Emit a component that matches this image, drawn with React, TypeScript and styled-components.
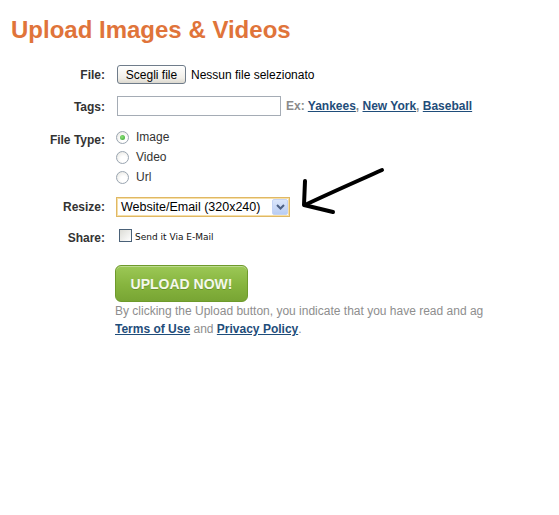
import React from 'react';
import styled, { createGlobalStyle } from 'styled-components';

const GlobalStyle = createGlobalStyle`
	html, body {
		margin: 0;
		padding: 0;
		background: #ffffff;
	}
	body {
		font-family: "Liberation Sans", Arial, sans-serif;
		font-size: 12px;
		color: #333333;
	}
`;

export default function App() {
	return (
		<Page>
			<GlobalStyle />
			<Title>Upload Images &amp; Videos</Title>

			<Form>
				<Row $top={21}>
					<Label>File:</Label>
					<Field>
						<FileButton type="button">Scegli file</FileButton>
						<FileName>Nessun file selezionato</FileName>
					</Field>
				</Row>

				<Row $top={12}>
					<Label>Tags:</Label>
					<Field>
						<TextInput type="text" />
						<Hint>
							Ex: <HintLink href="#">Yankees</HintLink>, <HintLink href="#">New York</HintLink>,{' '}
							<HintLink href="#">Baseball</HintLink>
						</Hint>
					</Field>
				</Row>

				<Row $top={11}>
					<Label>File Type:</Label>
					<RadioList>
						<RadioOption>
							<Radio $checked />
							Image
						</RadioOption>
						<RadioOption>
							<Radio />
							Video
						</RadioOption>
						<RadioOption>
							<Radio />
							Url
						</RadioOption>
					</RadioList>
				</Row>

				<Row $top={10}>
					<Label>Resize:</Label>
					<Field>
						<Select>
							<SelectValue>Website/Email (320x240)</SelectValue>
							<SelectArrow>
								<svg width="9" height="6" viewBox="0 0 9 6">
									<path d="M1 1 L4.5 4.5 L8 1" fill="none" stroke="#4d6185" strokeWidth="2" />
								</svg>
							</SelectArrow>
						</Select>
					</Field>
				</Row>

				<Row $top={12}>
					<Label>Share:</Label>
					<Field>
						<CheckLabel>
							<Checkbox />
							Send it Via E-Mail
						</CheckLabel>
					</Field>
				</Row>

				<Actions>
					<UploadButton type="button">UPLOAD NOW!</UploadButton>
					<Disclaimer>
						<Line>By clicking the Upload button, you indicate that you have read and agree to the</Line>
						<Line>
							<TermsLink href="#">Terms of Use</TermsLink> and <TermsLink href="#">Privacy Policy</TermsLink>.
						</Line>
					</Disclaimer>
				</Actions>
			</Form>

			<Annotation width="559" height="515" viewBox="0 0 559 515">
				<g fill="none" stroke="#000" strokeWidth="4" strokeLinecap="round" strokeLinejoin="round">
					<path d="M382 170 C360 180 330 193 305 205" />
					<path d="M305 181 L304 205 L333 212" />
				</g>
			</Annotation>
		</Page>
	);
}

const Page = styled.div`
	position: relative;
	width: 559px;
	height: 515px;
	overflow: hidden;
`;

const Title = styled.h1`
	margin: 0;
	padding: 16px 0 0 11px;
	font-family: "Liberation Sans", Arial, sans-serif;
	font-size: 24px;
	font-weight: bold;
	line-height: 28px;
	color: #e0743a;
`;

const Form = styled.div`
	display: flex;
	flex-direction: column;
`;

const Row = styled.div<{ $top: number }>`
	display: grid;
	grid-template-columns: 105px 1fr;
	column-gap: 11px;
	align-items: baseline;
	margin-top: ${(props) => props.$top}px;
`;

const Label = styled.div`
	text-align: right;
	font-weight: bold;
	font-size: 12px;
	color: #333333;
`;

const Field = styled.div`
	display: flex;
	align-items: center;
`;

const FileButton = styled.button`
	height: 19px;
	width: 69px;
	margin: 0 0 0 1px;
	padding: 0;
	border: 1px solid #6f7c8a;
	border-radius: 3px;
	background: linear-gradient(#ffffff, #f1efe9 70%, #dcd8cf);
	font-family: "Liberation Sans", Arial, sans-serif;
	font-size: 12px;
	color: #000000;
`;

const FileName = styled.span`
	margin-left: 5px;
	font-size: 12px;
	color: #000000;
`;

const TextInput = styled.input`
	box-sizing: border-box;
	width: 164px;
	height: 20px;
	margin: 0 0 0 1px;
	border: 1px solid #a5acb5;
	padding: 0 3px;
`;

const Hint = styled.span`
	margin-left: 5px;
	font-size: 12px;
	font-weight: bold;
	color: #8a8a8a;
`;

const HintLink = styled.a`
	color: #1f4d7a;
	font-weight: bold;
	text-decoration: underline;
`;

const RadioList = styled.div`
	display: flex;
	flex-direction: column;
`;

const RadioOption = styled.label`
	display: flex;
	align-items: center;
	height: 20px;
	font-size: 12px;
	color: #333333;
`;

const Radio = styled.span<{ $checked?: boolean }>`
	box-sizing: border-box;
	position: relative;
	width: 13px;
	height: 13px;
	margin: 0 7px 0 0;
	border: 1px solid #9aa5b1;
	border-radius: 50%;
	background: radial-gradient(circle at 60% 65%, #ffffff 30%, #e3e2dc 100%);

	&::after {
		content: '';
		display: ${(props) => (props.$checked ? 'block' : 'none')};
		position: absolute;
		left: 3px;
		top: 3px;
		width: 5px;
		height: 5px;
		border-radius: 50%;
		background: radial-gradient(circle at 40% 40%, #8fe07a, #2fa42c);
	}
`;

const Select = styled.div`
	box-sizing: border-box;
	display: flex;
	align-items: center;
	justify-content: space-between;
	width: 174px;
	height: 20px;
	border: 1px solid #e0b864;
	box-shadow: inset 0 0 0 1px #f6dfa8;
	background: #ffffff;
	padding: 0 1px 0 4px;
`;

const SelectValue = styled.span`
	font-size: 12.5px;
	color: #000000;
`;

const SelectArrow = styled.span`
	box-sizing: border-box;
	display: flex;
	align-items: center;
	justify-content: center;
	width: 16px;
	height: 16px;
	border: 1px solid #c3d3f5;
	border-radius: 2px;
	background: linear-gradient(#dbe6fb, #b9cdf3);
`;

const CheckLabel = styled.label`
	display: flex;
	align-items: flex-end;
	font-family: "DejaVu Sans", Verdana, sans-serif;
	font-size: 9px;
	color: #111111;
`;

const Checkbox = styled.span`
	box-sizing: border-box;
	width: 13px;
	height: 13px;
	margin: 0 3px 0 3px;
	border: 1px solid #4a6178;
	background: linear-gradient(135deg, #dcdcd6, #ffffff);
`;

const Actions = styled.div`
	display: flex;
	flex-direction: column;
	align-items: flex-start;
	margin: 20px 0 0 115px;
`;

const UploadButton = styled.button`
	width: 133px;
	height: 37px;
	border: 1px solid #6e9a2c;
	border-radius: 6px;
	background: linear-gradient(#9cc856, #86b43e 55%, #78a534);
	box-shadow: inset 0 1px 0 rgba(255, 255, 255, 0.35);
	font-family: "Liberation Sans", Arial, sans-serif;
	font-size: 14px;
	font-weight: bold;
	color: #f4f8ec;
	text-shadow: 0 1px 0 rgba(60, 90, 20, 0.35);
`;

const Disclaimer = styled.div`
	width: 368px;
	overflow: hidden;
	font-size: 12px;
	line-height: 18px;
	color: #8e8e8e;
`;

const Line = styled.div`
	white-space: nowrap;
`;

const TermsLink = styled.a`
	color: #1f4d7a;
	font-weight: bold;
	text-decoration: underline;
`;

const Annotation = styled.svg`
	position: absolute;
	left: 0;
	top: 0;
	pointer-events: none;
`;
